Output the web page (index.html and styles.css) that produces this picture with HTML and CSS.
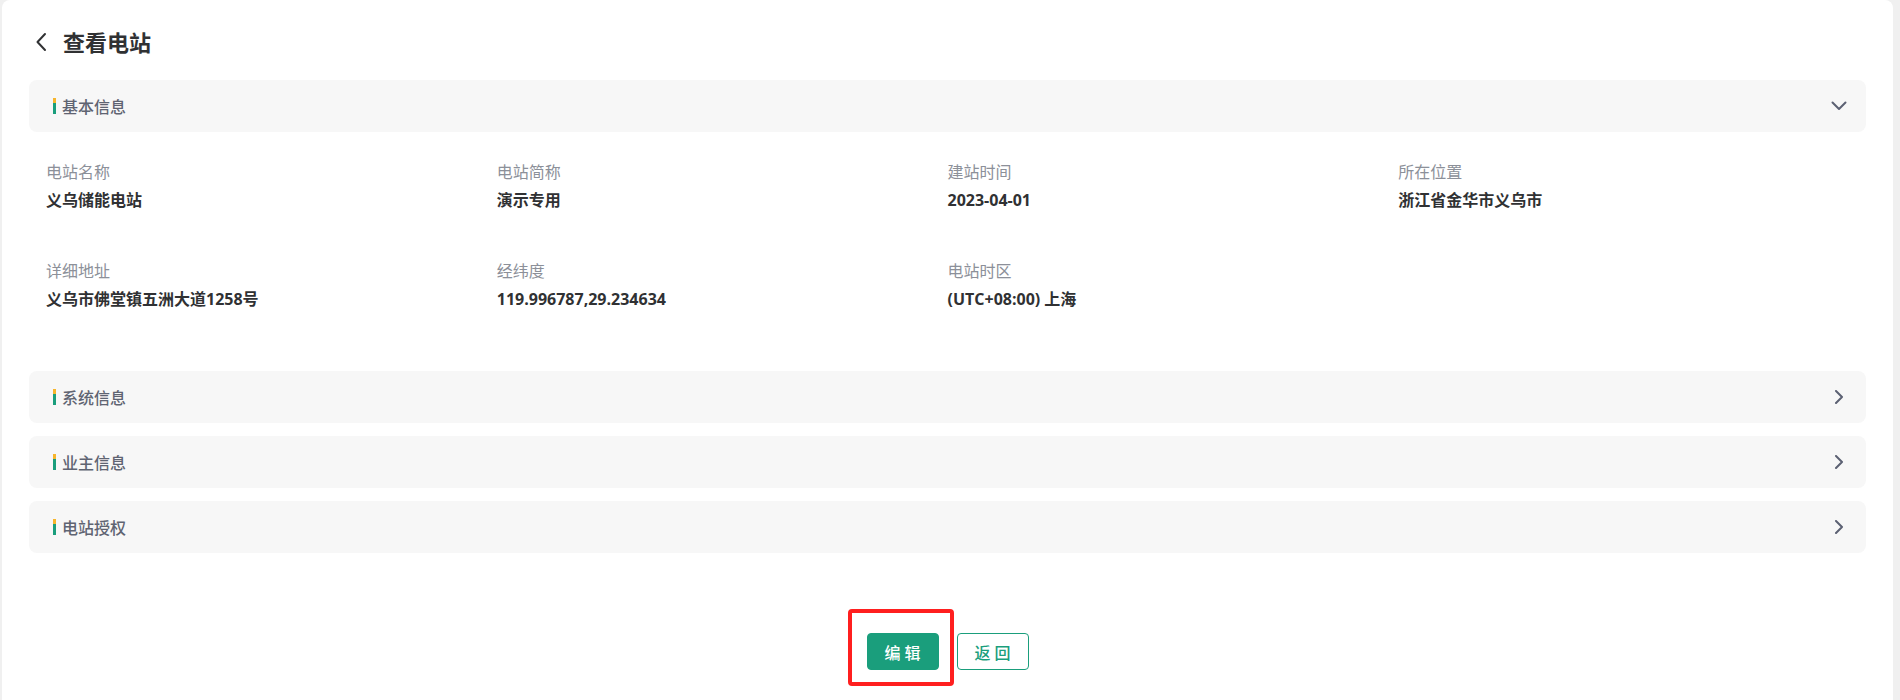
FILE: index.html
```html
<!DOCTYPE html>
<html lang="zh-CN">
<head>
<meta charset="utf-8">
<title>查看电站</title>
<link rel="stylesheet" href="styles.css">
</head>
<body>
<div class="page">
  <div class="card">
    <div class="title-row">
      <svg class="back" width="12" height="20" viewBox="0 0 12 20"><path d="M10 2 L2.5 10 L10 18" fill="none" stroke="#303133" stroke-width="2" stroke-linecap="round" stroke-linejoin="round"/></svg>
      <h1 class="title">查看电站</h1>
    </div>

    <div class="section">
      <div class="sec-head">
        <span class="mark"></span><span class="sec-title">基本信息</span>
        <svg class="arrow" width="16" height="10" viewBox="0 0 16 10"><path d="M1.5 1.5 L8 8 L14.5 1.5" fill="none" stroke="#5c6173" stroke-width="2" stroke-linecap="round" stroke-linejoin="round"/></svg>
      </div>
      <div class="fields">
        <div class="field"><div class="label">电站名称</div><div class="value">义乌储能电站</div></div>
        <div class="field"><div class="label">电站简称</div><div class="value">演示专用</div></div>
        <div class="field"><div class="label">建站时间</div><div class="value">2023-04-01</div></div>
        <div class="field"><div class="label">所在位置</div><div class="value">浙江省金华市义乌市</div></div>
        <div class="field"><div class="label">详细地址</div><div class="value">义乌市佛堂镇五洲大道1258号</div></div>
        <div class="field"><div class="label">经纬度</div><div class="value">119.996787,29.234634</div></div>
        <div class="field"><div class="label">电站时区</div><div class="value">(UTC+08:00) 上海</div></div>
      </div>
    </div>

    <div class="section">
      <div class="sec-head">
        <span class="mark"></span><span class="sec-title">系统信息</span>
        <svg class="arrow" width="16" height="14" viewBox="0 0 16 14"><path d="M5 1 L11 7 L5 13" fill="none" stroke="#5c6173" stroke-width="2" stroke-linecap="round" stroke-linejoin="round"/></svg>
      </div>
    </div>
    <div class="section">
      <div class="sec-head">
        <span class="mark"></span><span class="sec-title">业主信息</span>
        <svg class="arrow" width="16" height="14" viewBox="0 0 16 14"><path d="M5 1 L11 7 L5 13" fill="none" stroke="#5c6173" stroke-width="2" stroke-linecap="round" stroke-linejoin="round"/></svg>
      </div>
    </div>
    <div class="section">
      <div class="sec-head">
        <span class="mark"></span><span class="sec-title">电站授权</span>
        <svg class="arrow" width="16" height="14" viewBox="0 0 16 14"><path d="M5 1 L11 7 L5 13" fill="none" stroke="#5c6173" stroke-width="2" stroke-linecap="round" stroke-linejoin="round"/></svg>
      </div>
    </div>

    <div class="actions">
      <div class="edit-wrap">
        <button class="btn btn-primary">编 辑</button>
        <span class="highlight"></span>
      </div>
      <button class="btn btn-plain">返 回</button>
    </div>
  </div>
</div>
</body>
</html>
```
FILE: styles.css
```css
html, body {
  margin: 0;
  padding: 0;
  height: 100%;
  overflow: hidden;
}
body {
  background: #f0f0f0;
  font-family: "Open Sans", "Noto Sans CJK SC", sans-serif;
  color: #303133;
}
.page {
  padding: 0 7px 0 2px;
}
.card {
  background: #ffffff;
  border-radius: 8px;
  padding: 24px 27px 0 27px;
  min-height: 720px;
  box-sizing: border-box;
}
.title-row {
  display: flex;
  align-items: center;
  height: 36px;
  padding-left: 6px;
  gap: 16px;
}
.back {
  display: block;
}
.title {
  margin: 0;
  font-size: 22px;
  font-weight: 700;
  color: #303133;
  line-height: 36px;
}
.section {
  margin-top: 13px;
}
.title-row + .section {
  margin-top: 20px;
}
.sec-head {
  display: flex;
  align-items: center;
  height: 52px;
  background: #f7f7f7;
  border-radius: 8px;
  padding: 0 19px 0 24px;
}
.mark {
  width: 3px;
  height: 16px;
  background: linear-gradient(to bottom, #f7b52c 0, #f7b52c 30%, #1a9e7c 30%, #1a9e7c 100%);
  margin-right: 6px;
  flex: none;
}
.sec-title {
  font-size: 16px;
  font-weight: 500;
  color: #5f6472;
  flex: 1;
}
.arrow {
  display: block;
  flex: none;
}
.fields {
  display: grid;
  grid-template-columns: repeat(4, 1fr);
  row-gap: 51px;
  padding: 30px 17px 49px 17px;
}
.field {
  display: flex;
  flex-direction: column;
  gap: 8px;
}
.label {
  font-size: 16px;
  line-height: 20px;
  color: #8c9099;
}
.value {
  font-size: 16px;
  line-height: 20px;
  font-weight: 700;
  color: #303133;
}
.actions {
  display: flex;
  justify-content: center;
  gap: 18px;
  margin-top: 80px;
}
.edit-wrap {
  position: relative;
}
.btn {
  width: 72px;
  height: 37px;
  border-radius: 4px;
  font-family: "Open Sans", "Noto Sans CJK SC", sans-serif;
  font-size: 16px;
  font-weight: 500;
  cursor: pointer;
  padding: 0;
  box-sizing: border-box;
}
.btn-primary {
  background: #1a9e7c;
  border: 1px solid #1a9e7c;
  color: #ffffff;
}
.btn-plain {
  background: #ffffff;
  border: 1px solid #1a9e7c;
  color: #1a9e7c;
}
.highlight {
  position: absolute;
  left: -19px;
  top: -24px;
  width: 106px;
  height: 77px;
  border: 4px solid #ff1f1f;
  border-radius: 4px;
  box-sizing: border-box;
  pointer-events: none;
}
```
